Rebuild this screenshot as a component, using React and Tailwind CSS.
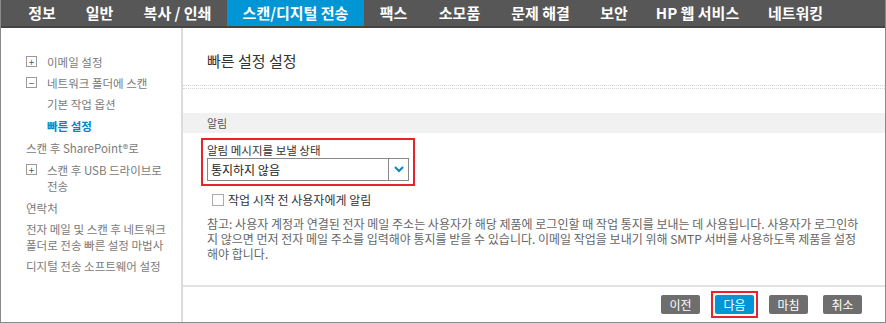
import { useState } from 'react';

const tabs = [
  { label: '정보', w: 'w-[58px]' },
  { label: '일반', w: 'w-[57px]' },
  { label: '복사 / 인쇄', w: 'w-[99px]' },
  { label: '스캔/디지털 전송', w: 'w-[137px]', active: true },
  { label: '팩스', w: 'w-[59px]' },
  { label: '소모품', w: 'w-[73px]' },
  { label: '문제 해결', w: 'w-[89px]' },
  { label: '보안', w: 'w-[58px]' },
  { label: 'HP 웹 서비스', w: 'w-[109px]' },
  { label: '네트워킹', w: 'w-[87px]' },
];

function Toggle({ open }) {
  return (
    <span className="w-[11px] h-[11px] border border-[#9a9a9a] flex items-center justify-center text-[10px] leading-none text-[#555] shrink-0 bg-white">
      {open ? '−' : '+'}
    </span>
  );
}

function SideNav() {
  return (
    <div className="w-[182px] shrink-0 border-r-2 border-[#dcdcdc] pt-[23px] text-[11.5px] text-[#7a7a7a] leading-[16px]">
      <div className="flex items-center gap-[10px] pl-[25px] h-[21px]">
        <Toggle /> <span>이메일 설정</span>
      </div>
      <div className="flex items-center gap-[10px] pl-[25px] h-[21px]">
        <Toggle open /> <span>네트워크 폴더에 스캔</span>
      </div>
      <div className="pl-[46px] h-[22px] flex items-center">기본 작업 옵션</div>
      <div className="pl-[46px] h-[22px] flex items-center text-[#0a83c4] font-bold">빠른 설정</div>
      <div className="pl-[25px] h-[22px] flex items-center">스캔 후 SharePoint®로</div>
      <div className="flex gap-[10px] pl-[25px] pt-[3px]">
        <span className="mt-[2px]"><Toggle /></span>
        <span>스캔 후 USB 드라이브로<br />전송</span>
      </div>
      <div className="pl-[25px] h-[22px] flex items-center mt-[3px]">연락처</div>
      <div className="pl-[25px] pt-[2px]">
        전자 메일 및 스캔 후 네트워크<br />폴더로 전송 빠른 설정 마법사
      </div>
      <div className="pl-[25px] pt-[5px]">디지털 전송 소프트웨어 설정</div>
    </div>
  );
}

export default function App() {
  const [notify, setNotify] = useState(false);

  return (
    <div className="w-[886px] h-[323px] bg-white overflow-hidden flex flex-col border-x border-b border-[#8a8a8a] font-['Noto_Sans_CJK_KR',sans-serif]">
      <div className="h-[28px] shrink-0 bg-[#575757] border-b-2 border-[#444] flex pl-[12px] text-white text-[15px] font-bold">
        {tabs.map((t) => (
          <div
            key={t.label}
            className={`${t.w} shrink-0 flex items-center justify-center whitespace-nowrap ${t.active ? 'bg-[#0096d6]' : ''}`}
          >
            {t.label}
          </div>
        ))}
      </div>

      <div className="flex flex-1 min-h-0">
        <SideNav />

        <div className="flex-1 flex flex-col">
          <div className="h-[57px] flex items-center pl-[24px] pt-[10px] text-[15px] text-[#333]">빠른 설정 설정</div>
          <div className="h-[4px] border-y border-dotted border-[#d6d6d6]" />

          <div className="mt-[24px] h-[20px] bg-[#f1f1f1] flex items-center pl-[24px] text-[11px] text-[#555]">알림</div>

          <div className="ml-[18px] mt-[5px] w-[214px] border-2 border-[#e8242b] px-[4px] pt-[2px] pb-[3px]">
            <div className="text-[11.5px] text-[#333] leading-[16px]">알림 메시지를 보낼 상태</div>
            <div className="h-[23px] border border-[#888] flex">
              <div className="flex-1 flex items-center pl-[3px] text-[12px] text-[#222]">통지하지 않음</div>
              <div className="w-[20px] border-l border-[#888] flex items-center justify-center">
                <svg width="10" height="7" viewBox="0 0 10 7">
                  <path d="M1 1 L5 5 L9 1" fill="none" stroke="#0a83c4" strokeWidth="2" />
                </svg>
              </div>
            </div>
          </div>

          <label className="ml-[29px] mt-[7px] flex items-center gap-[4px] text-[12px] text-[#333] h-[14px]">
            <span
              onClick={() => setNotify(!notify)}
              className="w-[12px] h-[12px] border border-[#aaa] bg-white"
            />
            작업 시작 전 사용자에게 알림
          </label>

          <div className="ml-[24px] mr-[22px] mt-[9px] text-[12px] text-[#666] leading-[15px] break-all">
            참고: 사용자 계정과 연결된 전자 메일 주소는 사용자가 해당 제품에 로그인할 때 작업 통지를 보내는 데 사용됩니다. 사용자가 로그인하지 않으면 먼저 전자 메일 주소를 입력해야 통지를 받을 수 있습니다. 이메일 작업을 보내기 위해 SMTP 서버를 사용하도록 제품을 설정해야 합니다.
          </div>

          <div className="mt-auto border-t-2 border-[#e2e2e2] h-[37px] flex items-center justify-end pr-[23px] gap-[15px] text-[12px] text-white">
            <button className="w-[39px] h-[19px] bg-[#6e6e6e] rounded-[2px]">이전</button>
            <div className="border-2 border-[#e8242b] p-[2px] -mx-[4px]">
              <button className="w-[39px] h-[19px] bg-[#0096d6] rounded-[2px] block">다음</button>
            </div>
            <button className="w-[39px] h-[19px] bg-[#6e6e6e] rounded-[2px]">마침</button>
            <button className="w-[39px] h-[19px] bg-[#6e6e6e] rounded-[2px]">취소</button>
          </div>
        </div>
      </div>
    </div>
  );
}
